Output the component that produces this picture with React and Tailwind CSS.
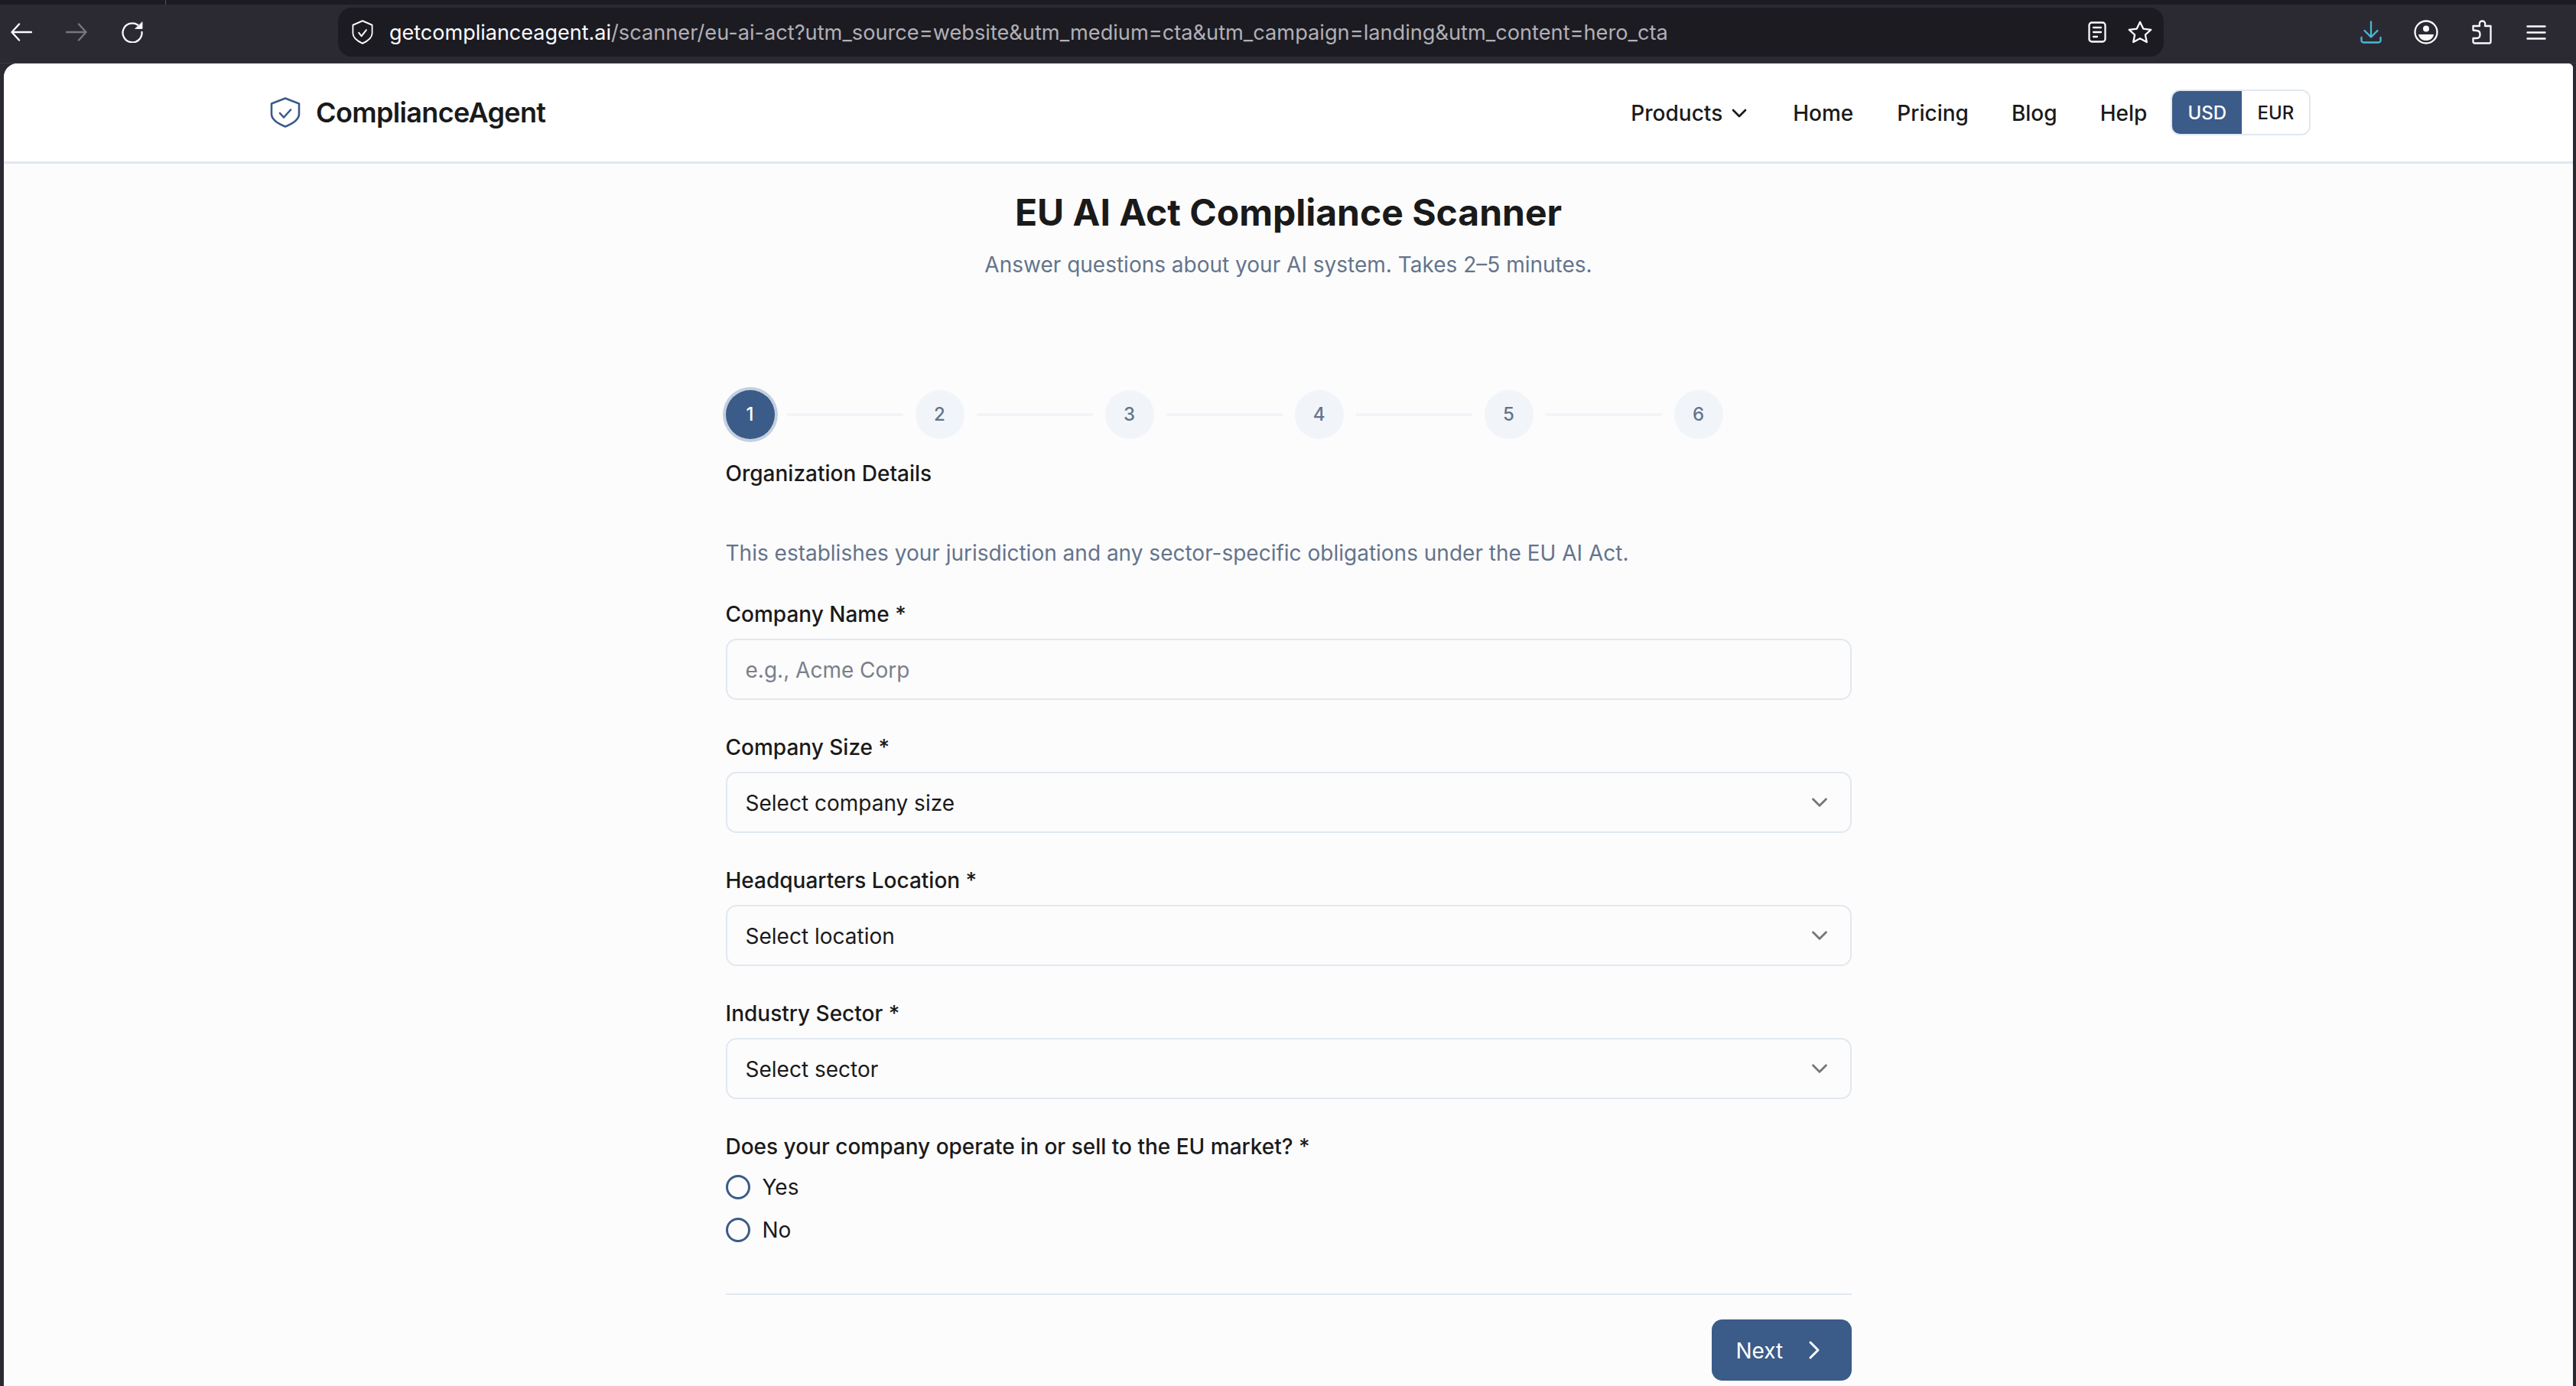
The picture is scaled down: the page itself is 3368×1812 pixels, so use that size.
import React from "react";
import { ChevronDown, ChevronRight } from "lucide-react";

const Arrow = ({ flip, color }) => (
  <svg width="28" height="24" viewBox="0 0 28 24" fill="none" stroke={color} strokeWidth="2.4" strokeLinecap="round" strokeLinejoin="round" style={flip ? { transform: "scaleX(-1)" } : undefined}>
    <path d="M1.5 12H27M11 1.5 1.5 12 11 22.5" />
  </svg>
);

const Shield = ({ w, h, color, sw }) => (
  <svg width={w} height={h} viewBox="0 0 40 40" preserveAspectRatio="none" fill="none" stroke={color} strokeWidth={sw} strokeLinecap="round" strokeLinejoin="round">
    <path d="M20 1.5 38 8.5V22C38 29 30 34.5 20 38.5 10 34.5 2 29 2 22V8.5Z" />
    <path d="M13 21 18 26.5 27 16.5" />
  </svg>
);

const Field = ({ label, children }) => (
  <div className="flex flex-col">
    <label className="h-[36px] leading-[36px] mb-[14px] text-[28px] font-[450]">{label}</label>
    {children}
  </div>
);

const Select = ({ text }) => (
  <div className="h-[80px] border-2 border-[#e2e8f0] rounded-[14px] pl-[24px] pr-[23px] flex items-center justify-between text-[28px]">
    <span className="mt-[2px]">{text}</span>
    <ChevronDown size={34} strokeWidth={2} color="#777777" />
  </div>
);

const Radio = ({ text }) => (
  <div className="h-[32px] flex items-center gap-[16px] text-[28px]">
    <span className="w-[32px] h-[32px] rounded-full border-[3px] border-[#3b5b88]" />
    <span className="font-normal">{text}</span>
  </div>
);

export default function App() {
  const font = { fontFamily: 'Inter, "Liberation Sans", sans-serif' };
  return (
    <div className="w-[3368px] h-[1812px] overflow-hidden bg-[#2b2a33] flex flex-col" style={font}>
      <div className="h-[6px] bg-[#1c1b22] shrink-0 flex">
        <div className="ml-[216px] w-[1px] bg-[#55555c]" />
      </div>
      <div className="h-[77px] shrink-0 flex items-center pl-[14px] pb-[4px] border-b border-[#3a3a42]">
        <Arrow color="#fbfbfe" />
        <div className="ml-[44px] flex"><Arrow flip color="#77767c" /></div>
        <svg className="ml-[44px]" width="29" height="28" viewBox="0 0 29 28" fill="none" stroke="#fbfbfe" strokeWidth="2.3" strokeLinecap="round">
          <path d="M22 4.5A12.5 12.5 0 1 0 27.5 14" />
          <path d="M19 9.5H28V1Z" fill="#fbfbfe" strokeWidth="0.8" strokeLinejoin="round" />
        </svg>
        <div className="ml-[255px] w-[2387px] h-[64px] rounded-[18px] bg-[#1c1b22] flex items-center pl-[18px] pr-[15px]">
          <Shield w={28} h={32} color="#fbfbfe" sw={2.6} />
          <span className="ml-[21px] mt-[2px] text-[27px] whitespace-nowrap text-[#fbfbfe]">
            getcomplianceagent.ai<span className="text-[#b0b0b6] text-[27.2px]">/scanner/eu-ai-act?utm_source=website&amp;utm_medium=cta&amp;utm_campaign=landing&amp;utm_content=hero_cta</span>
          </span>
          <div className="ml-auto flex items-center gap-[28px]">
            <svg width="24" height="28" viewBox="0 0 24 28" fill="none" stroke="#fbfbfe" strokeWidth="2.3" strokeLinecap="round">
              <rect x="1.5" y="1.5" width="21" height="25" rx="3.5" />
              <path d="M7 8H17M7 14H17M7 20H12" />
            </svg>
            <svg width="32" height="30" viewBox="0 0 32 30" fill="none" stroke="#fbfbfe" strokeWidth="2.3" strokeLinejoin="round">
              <path d="M16 1.8 20.2 10.6 30.2 11.8 22.9 18.5 24.8 28 16 23.3 7.2 28 9.1 18.5 1.8 11.8 11.8 10.6Z" />
            </svg>
          </div>
        </div>
        <div className="ml-[257px] flex items-center">
          <svg width="28" height="30" viewBox="0 0 28 30" fill="none" stroke="#4ab8d4" strokeWidth="2.3" strokeLinecap="round" strokeLinejoin="round">
            <path d="M14 1.5V21M5.5 13 14 21.5 22.5 13M1.5 22V26A2.5 2.5 0 0 0 4 28.5H24A2.5 2.5 0 0 0 26.5 26V22" />
          </svg>
          <svg className="ml-[42px]" width="32" height="32" viewBox="0 0 32 32" fill="none" stroke="#fbfbfe" strokeWidth="2.3">
            <circle cx="16" cy="16" r="14.5" />
            <circle cx="16" cy="11.5" r="4" fill="#fbfbfe" stroke="none" />
            <path d="M6 19H26C25 24.5 21 27 16 27S7 24.5 6 19Z" fill="#fbfbfe" stroke="none" />
          </svg>
          <svg className="ml-[44px]" width="26" height="32" viewBox="0 0 26 32" fill="none" stroke="#fbfbfe" strokeWidth="2.3" strokeLinejoin="round">
            <path d="M1.5 13.5V8H10C9 4 10.5 1.5 13.5 1.5S18 4 17 8H24.5V28.5A2 2 0 0 1 22.5 30.5H3.5A2 2 0 0 1 1.5 28.5V24H6C9 24 10.5 22 10.5 19S9 14 6 14Z" />
          </svg>
          <svg className="ml-[45px]" width="26" height="19" viewBox="0 0 26 19" fill="none" stroke="#fbfbfe" strokeWidth="2.4" strokeLinecap="round">
            <path d="M1.5 1.5H24.5M1.5 9.5H24.5M1.5 17.5H24.5" />
          </svg>
        </div>
      </div>

      <div className="flex-1 ml-[5px] mr-[4px] bg-[#fcfcfd] rounded-tl-[18px] rounded-tr-[6px] overflow-hidden text-[#1a1a1a] flex flex-col">
        <header className="h-[131px] shrink-0 bg-white border-b-[3px] border-[#e2e8f0] pl-[348px] flex items-center">
          <Shield w={40} h={40} color="#3b5b88" sw={2.6} />
          <span className="ml-[20px] text-[36px] font-semibold tracking-[-0.65px]">ComplianceAgent</span>
          <nav className="ml-[1419px] mt-[2px] flex items-center text-[28px] font-[450]">
            <span>Products</span>
            <ChevronDown size={32} strokeWidth={2} className="ml-[6px]" />
            <span className="ml-[54px]">Home</span>
            <span className="ml-[57px]">Pricing</span>
            <span className="ml-[56px]">Blog</span>
            <span className="ml-[56px]">Help</span>
            <div className="ml-[31px] -mt-[2px] h-[60px] w-[183px] rounded-[12px] border-2 border-[#e2e8f0] overflow-hidden flex text-[24px]">
              <span className="w-[91px] pt-[2px] bg-[#3b5b88] text-white flex items-center justify-center">USD</span>
              <span className="flex-1 pt-[2px] flex items-center justify-center">EUR</span>
            </div>
          </nav>
        </header>

        <main className="w-[1472px] mx-auto flex flex-col shrink-0">
          <div className="text-center mt-[34px]">
            <h1 className="text-[48px] leading-[60px] font-bold">EU AI Act Compliance Scanner</h1>
            <p className="mt-[20px] text-[28px] leading-[36px] text-[#64748b]">Answer questions about your AI system. Takes 2–5 minutes.</p>
          </div>

          <div className="mt-[146px] flex items-center">
            {[1, 2, 3, 4, 5, 6].map((n, i) => (
              <React.Fragment key={n}>
                {i > 0 && <div className="w-[152px] h-[4px] mx-[16px] bg-[#f1f5f9]" />}
                <div className={n === 1
                  ? "w-[64px] h-[64px] rounded-full bg-[#3b5b88] text-white ring-4 ring-[#c4cfdf] flex items-center justify-center text-[24px] font-medium"
                  : "w-[64px] h-[64px] rounded-full bg-[#f1f5f9] text-[#64748b] flex items-center justify-center text-[24px] font-medium"}>{n}</div>
              </React.Fragment>
            ))}
          </div>
          <div className="mt-[27px] h-[36px] leading-[36px] text-[28px] font-[450]">Organization Details</div>
          <p className="pt-[68px] h-[105px] leading-[36px] text-[28px] text-[#64748b]">This establishes your jurisdiction and any sector-specific obligations under the EU AI Act.</p>

          <div className="mt-[43px] flex flex-col gap-[44px]">
            <Field label="Company Name *">
              <div className="h-[80px] border-2 border-[#e2e8f0] rounded-[14px] pl-[24px] flex items-center text-[28px] text-[#7a808a]"><span className="mt-[1px]">e.g., Acme Corp</span></div>
            </Field>
            <Field label="Company Size *"><Select text="Select company size" /></Field>
            <Field label="Headquarters Location *"><Select text="Select location" /></Field>
            <Field label="Industry Sector *"><Select text="Select sector" /></Field>
          </div>

          <div className="mt-[44px] h-[36px] leading-[36px] text-[28px] font-[450]">Does your company operate in or sell to the EU market? *</div>
          <div className="mt-[19px] flex flex-col gap-[24px]">
            <Radio text="Yes" />
            <Radio text="No" />
          </div>

          <div className="mt-[67px] border-t-2 border-[#e2e8f0] pt-[32px] flex justify-end">
            <div className="w-[183px] h-[80px] rounded-[14px] bg-[#3b5b88] text-white text-[28px] font-normal flex items-center pl-[32px]">
              <span className="mt-[2px]">Next</span>
              <ChevronRight size={40} strokeWidth={1.8} className="ml-[21px]" />
            </div>
          </div>
        </main>
      </div>
    </div>
  );
}
